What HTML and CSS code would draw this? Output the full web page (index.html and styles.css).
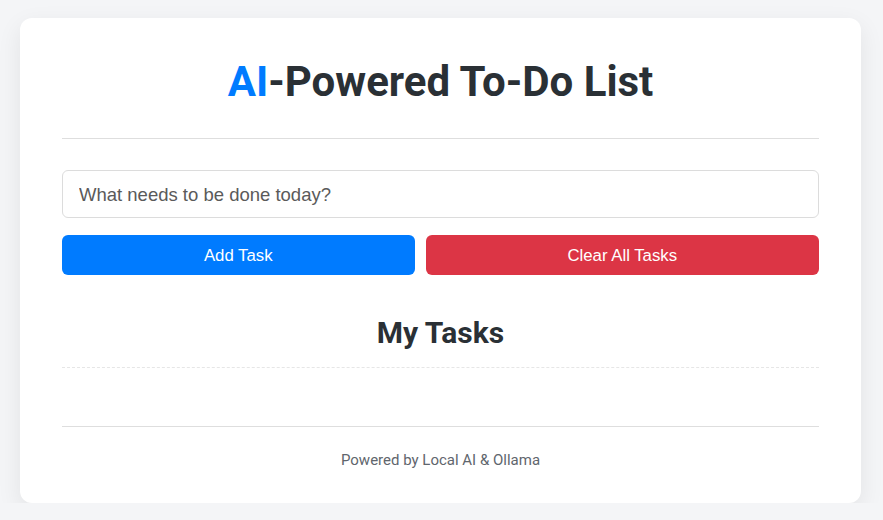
FILE: index.html
```html
<!DOCTYPE html>
<html>
<head>
<meta charset="utf-8">
<link rel="stylesheet" href="styles.css">
</head>
<body>
<div class="card">
  <h1 class="title"><span class="accent">AI</span>-Powered To-Do List</h1>
  <input class="task-input" type="text" placeholder="What needs to be done today?">
  <div class="actions">
    <button class="btn btn-add">Add Task</button>
    <button class="btn btn-clear">Clear All Tasks</button>
  </div>
  <h2 class="section-title">My Tasks</h2>
  <ul class="task-list"></ul>
  <footer class="footer">Powered by Local AI &amp; Ollama</footer>
</div>
</body>
</html>
```
FILE: styles.css
```css
* { box-sizing: border-box; }
html, body { margin: 0; }
body {
  background: #f4f5f7;
  padding: 18px 22px 0 20px;
  font-family: Roboto, "Liberation Sans", sans-serif;
  color: #2a3035;
}
.card {
  background: #fff;
  border-radius: 12px;
  box-shadow: 0 8px 24px rgba(0,0,0,0.08);
  padding: 39px 42px 34px;
}
.title {
  margin: 0;
  font-size: 42px;
  line-height: 1.2;
  font-weight: 700;
  text-align: center;
  padding-bottom: 31px;
  border-bottom: 1px solid #dedede;
  color: #2a3035;
}
.accent { color: #007bff; }
.task-input {
  display: block;
  width: 100%;
  margin-top: 31px;
  height: 48px;
  border: 1px solid #dcdcdc;
  border-radius: 6px;
  padding: 1px 16px 0;
  font-family: "Liberation Sans", Arial, sans-serif;
  font-size: 18.5px;
  color: #333;
}
.task-input::placeholder { color: #5a5a5a; }
.actions {
  display: flex;
  gap: 11px;
  margin-top: 17px;
}
.btn {
  flex: 1 1 auto;
  height: 40px;
  border: none;
  border-radius: 6px;
  color: #fff;
  font-family: "Liberation Sans", Arial, sans-serif;
  font-size: 16.8px;
  padding: 1px 20px 0;
}
.btn-add { background: #007bff; }
.btn-clear { background: #dc3545; }
.section-title {
  margin: 40px 0 0;
  font-size: 30px;
  line-height: 1.2;
  font-weight: 700;
  text-align: center;
  padding-bottom: 16px;
  border-bottom: 1px dashed #e6e6e6;
}
.task-list {
  list-style: none;
  margin: 0;
  padding: 0;
  height: 59px;
  border-bottom: 1px solid #dedede;
}
.footer {
  text-align: center;
  font-size: 15px;
  color: #5f666d;
  padding-top: 24px;
}
```
